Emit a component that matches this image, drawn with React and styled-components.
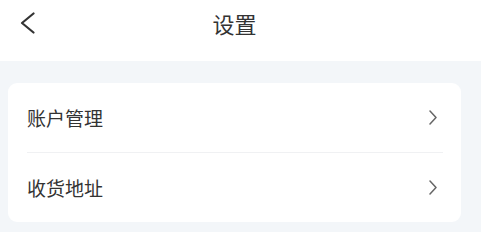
import React from 'react'
import styled, { createGlobalStyle } from 'styled-components'

const Global = createGlobalStyle`
  html, body { margin: 0; padding: 0; }
  body {
    background: #f3f6f9;
    font-family: "Noto Sans CJK SC", "Noto Sans", sans-serif;
    color: #333;
  }
`

const Page = styled.div`
  width: 481px;
  height: 232px;
  background: #f3f6f9;
  overflow: hidden;
`

const Header = styled.div`
  height: 61px;
  background: #fff;
  display: flex;
  align-items: flex-start;
`

const BackBtn = styled.div`
  width: 15px;
  height: 22px;
  margin: 12px 0 0 20px;
  display: flex;
`

const Title = styled.div`
  flex: 1;
  text-align: center;
  font-size: 22px;
  line-height: 22px;
  margin-top: 12px;
  padding-right: 47px;
  color: #333;
`

const Card = styled.div`
  margin: 22px 20px 0 8px;
  background: #fff;
  border-radius: 9px;
  padding: 0 18px 0 19px;
`

const Row = styled.div`
  height: 69px;
  display: flex;
  align-items: center;
  justify-content: space-between;
  border-top: ${p => (p.first ? 'none' : '1px solid #f0f1f3')};
`

const Label = styled.span`
  font-size: 19px;
  color: #333;
`

const Arrow = styled.div`
  width: 8px;
  height: 15px;
  margin-right: 6px;
  display: flex;
`

const Chevron = () => (
  <svg width="8" height="15" viewBox="0 0 8 15" fill="none">
    <path d="M1 1 L7 7.5 L1 14" stroke="#666" strokeWidth="1.5" strokeLinecap="round" strokeLinejoin="round" />
  </svg>
)

const items = ['账户管理', '收货地址']

export default function App () {
  return (
    <Page>
      <Global />
      <Header>
        <BackBtn>
          <svg width="15" height="22" viewBox="0 0 15 22" fill="none">
            <path d="M13.5 1.5 L2 11 L13.5 20.5" stroke="#333" strokeWidth="2.2" strokeLinecap="round" strokeLinejoin="round" />
          </svg>
        </BackBtn>
        <Title>设置</Title>
      </Header>
      <Card>
        {items.map((t, i) => (
          <Row key={t} first={i === 0}>
            <Label>{t}</Label>
            <Arrow><Chevron /></Arrow>
          </Row>
        ))}
      </Card>
    </Page>
  )
}
